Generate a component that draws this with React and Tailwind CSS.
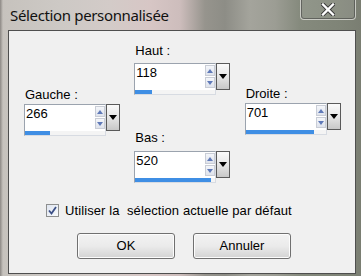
import React from "react";

const FONT = { fontFamily: '"Liberation Sans", Arial, sans-serif' };

function Spin() {
  return (
    <div className="flex flex-col gap-[1px] mt-[1px] w-[10px]">
      <div className="h-[11px] w-[10px] border border-[#c9cdd6] bg-gradient-to-b from-[#f4f6fa] to-[#dfe3ec] flex items-center justify-center">
        <svg width="6" height="4" viewBox="0 0 6 4"><polygon points="0,4 6,4 3,0" fill="#5f79b8" /></svg>
      </div>
      <div className="h-[11px] w-[10px] border border-[#c9cdd6] bg-gradient-to-b from-[#f4f6fa] to-[#dfe3ec] flex items-center justify-center">
        <svg width="6" height="4" viewBox="0 0 6 4"><polygon points="0,0 6,0 3,4" fill="#5f79b8" /></svg>
      </div>
    </div>
  );
}

function Field({ label, value, bar, className, gapClass }) {
  return (
    <div className={className}>
      <div className="text-[13px] leading-[15px] text-black pl-[1px]">{label}</div>
      <div className={"flex items-start " + gapClass}>
        <div className="w-[82px] h-[32px] border border-t-[#9ba3ae] border-l-[#9ba3ae] border-r-[#d7dbe2] border-b-[#d7dbe2] bg-white flex flex-col">
          <div className="flex flex-1">
            <div className="flex-1 text-[13px] leading-[15px] pl-[1px] pt-[1px] text-black">{value}</div>
            <Spin />
          </div>
          <div className="h-[4px] flex bg-[#f4f4f4]">
            <div className="h-full bg-[#3f8ee4]" style={{ width: bar }} />
          </div>
        </div>
        <div className="w-[14px] h-[27px] border border-[#5a5a5a] bg-gradient-to-b from-[#fafafa] via-[#e6e6e6] to-[#c8c8c8] flex justify-center pt-[10px]">
          <svg width="8" height="5" viewBox="0 0 8 5"><polygon points="0,0 8,0 4,5" fill="#000" /></svg>
        </div>
      </div>
    </div>
  );
}

export default function App() {
  return (
    <div
      className="w-[361px] h-[276px] flex flex-col overflow-hidden"
      style={{
        ...FONT,
        background:
          "linear-gradient(90deg, #8c8884 0px, #c6c2bd 3px, #cdc9c5 60px, #d3cbc8 110px, #d7c6c5 150px, #cdbdbc 180px, #96948d 205px, #8d8d86 225px, #a4a49c 250px, #9c9d94 275px, #858a7d 300px, #7f8477 340px, #7a7e72 361px)",
      }}
    >
      {/* Title bar */}
      <div className="h-[30px] flex items-start shrink-0">
        <div
          className="pl-[10px] pt-[5px] text-[15px] leading-[20px] text-[#111]"
          style={{ fontFamily: '"Noto Sans", "Open Sans", sans-serif', letterSpacing: "-0.35px" }}
        >
          Sélection personnalisée
        </div>
        <div className="ml-auto mr-[5px] w-[56px] h-[21px] -mt-[1px] rounded-b-[4px] border border-[#e4e4e0]/70 border-t-0 flex items-center justify-center bg-white/10 shadow-[inset_0_0_0_1px_rgba(60,60,60,0.55)]">
          <svg width="14" height="13" viewBox="0 0 14 13">
            <path d="M2 1.5 L12 11.5 M12 1.5 L2 11.5" stroke="#3a3a3a" strokeWidth="4.2" strokeLinecap="square" />
            <path d="M2 1.5 L12 11.5 M12 1.5 L2 11.5" stroke="#ffffff" strokeWidth="2.4" strokeLinecap="square" />
          </svg>
        </div>
      </div>

      {/* Client */}
      <div className="ml-[8px] mr-[5px] h-[244px] border border-[#4e4e4e] bg-[#f0f0f0] flex flex-col shrink-0">
        <div className="flex pl-[15px]">
          <Field className="w-[112px] pt-[56px]" gapClass="mt-[2px]" label="Gauche :" value="266" bar={25} />
          <div className="w-[112px] pt-[12px] flex flex-col">
            <Field gapClass="mt-[5px]" label="Haut :" value="118" bar={17} />
            <Field className="mt-[35px]" gapClass="mt-[6px]" label="Bas :" value="520" bar={76} />
          </div>
          <Field className="w-[112px] pt-[55px]" gapClass="mt-[2px]" label="Droite :" value="701" bar={68} />
        </div>

        <div className="flex items-center mt-[20px] pl-[37px]">
          <div className="w-[13px] h-[13px] border border-[#8e8f8f] bg-gradient-to-br from-[#dfe5f0] to-[#f8fafc] flex items-center justify-center">
            <svg width="9" height="9" viewBox="0 0 9 9">
              <path d="M1 4.5 L3.5 7.5 L8 1" stroke="#3b4f86" strokeWidth="1.8" fill="none" />
            </svg>
          </div>
          <div className="ml-[6px] text-[13px] leading-[15px] text-black whitespace-pre tracking-[0.1px]">Utiliser la  sélection actuelle par défaut</div>
        </div>

        <div className="flex pl-[68px] gap-[18px] mt-[15px]">
          <div className="w-[98px] h-[26px] rounded-[3px] border border-[#707070] bg-gradient-to-b from-[#f2f2f2] via-[#ebebeb] to-[#d3d3d3] shadow-[inset_0_0_0_1px_#fcfcfc] flex items-center justify-center text-[13px] text-black">OK</div>
          <div className="w-[98px] h-[26px] rounded-[3px] border border-[#707070] bg-gradient-to-b from-[#f2f2f2] via-[#ebebeb] to-[#d3d3d3] shadow-[inset_0_0_0_1px_#fcfcfc] flex items-center justify-center text-[13px] text-black">Annuler</div>
        </div>
      </div>
    </div>
  );
}
